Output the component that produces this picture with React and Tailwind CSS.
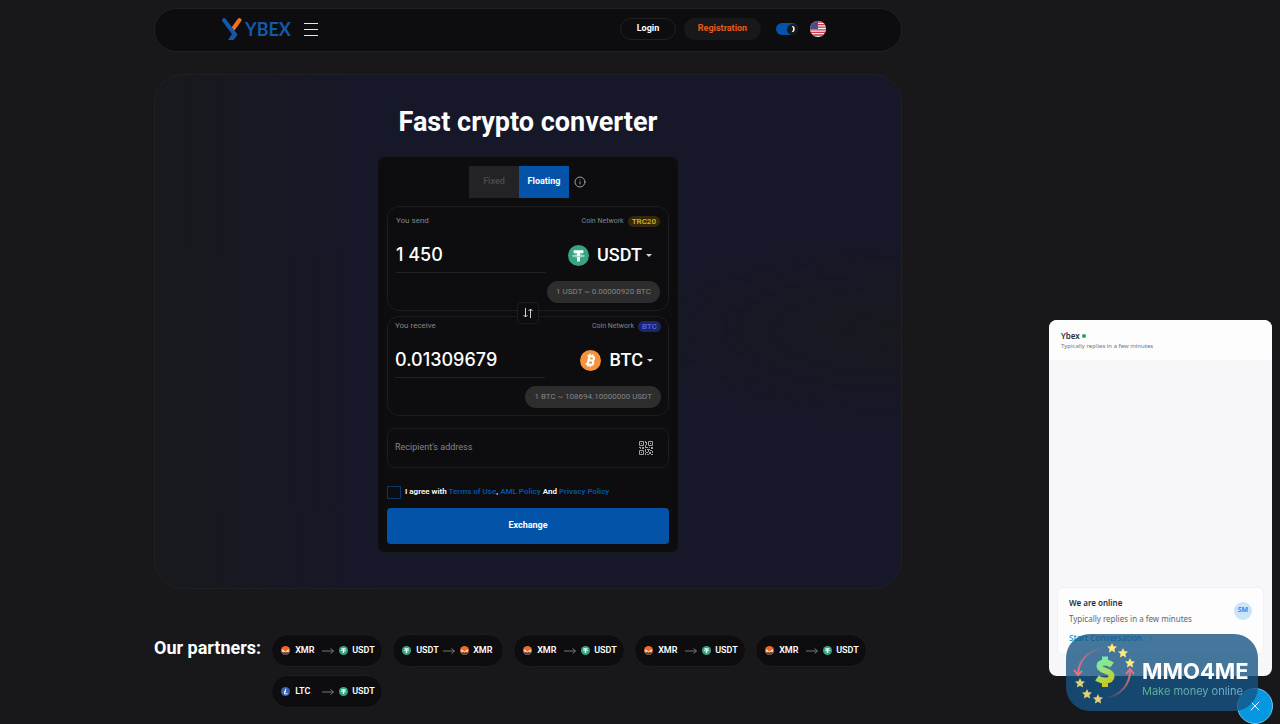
import { useState } from "react"
import { Info, X, ChevronRight } from "lucide-react"

const partners = [
  ["XMR", "USDT"],
  ["USDT", "XMR"],
  ["XMR", "USDT"],
  ["XMR", "USDT"],
  ["XMR", "USDT"],
  ["LTC", "USDT"],
]

function CoinIcon({ coin, className }) {
  if (coin === "USDT") {
    return (
      <svg viewBox="0 0 32 32" className={className} aria-hidden="true">
        <circle cx="16" cy="16" r="16" fill="#35a582" />
        <path fill="#fff" d="M8.500 8h15v4.600h-5.200v2c4 .2 7 1 7 2s-3 1.800-7 2V25h-4.600v-6.400c-4-.2-7-1-7-2s3-1.800 7-2v-2H8.500z" />
        <path fill="none" stroke="#35a582" strokeWidth="0.9" d="M13.700 15.500c-3.400.2-5.600.7-5.600 1.200 0 .7 3.600 1.200 7.900 1.200s7.900-.5 7.900-1.200c0-.5-2.200-1-5.600-1.200" />
      </svg>
    )
  }
  if (coin === "BTC") {
    return (
      <svg viewBox="0 0 32 32" className={className} aria-hidden="true">
        <circle cx="16" cy="16" r="16" fill="#f7923a" />
        <g transform="rotate(13 16 16)" fill="none" stroke="#fff" strokeWidth="3.2">
          <path d="M10 9.500h7.500a3 3 0 0 1 0 6.300H13M17.500 15.800a3.300 3.300 0 0 1 0 6.700H10M13 9.500v13" />
          <path strokeWidth="2.2" d="M13.700 6v3.500M17.600 6v3.500M13.700 22.500V26M17.600 22.500V26" />
        </g>
      </svg>
    )
  }
  if (coin === "LTC") {
    return (
      <svg viewBox="0 0 32 32" className={className} aria-hidden="true">
        <circle cx="16" cy="16" r="16" fill="#3a62ad" />
        <path fill="none" stroke="#fff" strokeWidth="3.5" d="M17 6l-4.500 18H23M10 18.500l8-3.500" />
      </svg>
    )
  }
  return (
    <svg viewBox="0 0 32 32" className={className} aria-hidden="true">
      <circle cx="16" cy="16" r="16" fill="#f26822" />
      <path fill="#f5ece8" d="M5 11l11 9 11-9v12H5z" />
      <path fill="#f26822" d="M9 10h14l-7 7z" />
      <path fill="#4c4c4c" d="M1.500 22.500H10V19l6 5 6-5v3.500h8.500a16 16 0 0 1-29 0z" />
    </svg>
  )
}

function QrIcon() {
  return (
    <svg viewBox="0 0 14 14" className="size-[14px]" aria-hidden="true">
      <path fill="none" stroke="#a0a0a0" d="M.5.5h4v4h-4zM9.500.5h4v4h-4zM.5 9.500h4v4h-4z" />
      <path
        fill="#a0a0a0"
        d="M2 2h1v1H2zM11 2h1v1h-1zM2 11h1v1H2zM6 0h1v2H6zM7 1h1v3H7zM6 4h1v2H6zM0 6h2v1H0zM3 6h2v2H3zM6 6h3v1H6zM10 6h1v1h-1zM12 6h2v2h-2zM1 7h1v1H1zM6 8h1v3H6zM8 8h3v1H8zM7 11h2v1H7zM9 9h1v2H9zM11 9h2v1h-2zM10 11h2v2h-2zM13 10h1v2h-1zM6 12h1v2H6zM8 13h2v1H8zM12 13h2v1h-2z"
      />
    </svg>
  )
}

function Header() {
  const [dark, setDark] = useState(true)

  return (
    <header className="flex h-11 items-center justify-between rounded-full border border-[#202022] bg-[#0d0d0f] pr-[75px] pb-[2px] pl-[66px]">
      <div className="flex items-center gap-[13px]">
        <a href="#" className="flex items-center gap-[2px] font-['Lato',sans-serif] text-lg leading-6 font-bold text-[#1259a8]">
          <svg viewBox="0 0 22 24" className="h-6 w-[22px]" fill="none" aria-hidden="true">
            <path stroke="#f4701f" strokeWidth="4" strokeLinecap="round" d="M18.500 3l-6.500 9" />
            <path stroke="#1259a8" strokeWidth="4" strokeLinecap="round" d="M3 3l10.500 14" />
            <path fill="#1259a8" d="M12 13l4 3.500c.6.7.6 1.400 0 2.100L12.500 23H7l4-6z" />
          </svg>
          YBEX
        </a>
        <button aria-label="Menu" className="text-gray-200">
          <svg viewBox="0 0 14 14" className="size-[14px]" stroke="currentColor" strokeWidth="1.2">
            <path d="M0 1.500h14M0 7.500h14M0 13.500h14" />
          </svg>
        </button>
      </div>
      <div className="flex items-center text-[9px] font-bold">
        <button className="h-[22px] w-14 rounded-full border border-[#202022] text-white">Login</button>
        <button className="ml-2 h-[22px] w-[77px] rounded-full bg-[#18181a] text-[#e8591c]">Registration</button>
        <label className="relative ml-[15px] flex h-3 w-[22px] items-center justify-end rounded-full bg-[#0353a9]">
          <input
            type="checkbox"
            aria-label="Dark theme"
            checked={dark}
            onChange={() => setDark(!dark)}
            className="absolute inset-0 appearance-none"
          />
          <span className="flex size-[11px] items-center justify-center rounded-full bg-[#18181a]">
            <svg viewBox="0 0 8 8" className="size-2" fill="#fff" aria-hidden="true">
              <path d="M2.500 .8a3.200 3.200 0 1 1 0 6.400c1-.9 1.500-2 1.500-3.200s-.5-2.300-1.500-3.200z" />
            </svg>
          </span>
        </label>
        <button aria-label="Language" className="ml-3">
          <svg viewBox="0 0 16 16" className="size-4">
            <clipPath id="flag">
              <circle cx="8" cy="8" r="8" />
            </clipPath>
            <g clipPath="url(#flag)">
              <rect width="16" height="16" fill="#f3eef0" />
              <path stroke="#c93648" strokeWidth="1.3" d="M0 1h16M0 3.600h16M0 6.200h16M0 8.800h16M0 11.400h16M0 14h16" />
              <rect width="8" height="8" fill="#4b4e88" />
            </g>
          </svg>
        </button>
      </div>
    </header>
  )
}

function AmountBox({ id, label, coin, value, network, badge, rate, className }) {
  return (
    <div className={className}>
      <div className="flex h-3 items-center justify-between text-[8px] text-[#858585]">
        <label htmlFor={id}>{label}</label>
        <div className="flex items-center gap-1 text-[7px]">
          Coin Network
          <span className={badge}>{network}</span>
        </div>
      </div>
      <div className="flex h-[46px] items-end justify-between">
        <input
          id={id}
          defaultValue={value}
          className="h-9 w-[150px] border-b border-[#222224] bg-transparent font-['Inter',sans-serif] text-lg font-medium text-white outline-none"
        />
        <button className="flex h-9 items-center gap-2 pr-2 text-lg font-medium text-white">
          <CoinIcon coin={coin} className="size-[21px]" />
          {coin}
          <span className="-ml-1 border-x-[3px] border-t-[3px] border-x-transparent border-t-gray-300" />
        </button>
      </div>
      <div className="mt-2 flex justify-end">
        <span className="rounded-full bg-[#2d2d2e] px-[9px] text-[8px] leading-[22px] text-[#858585]">{rate}</span>
      </div>
    </div>
  )
}

function Converter() {
  const [mode, setMode] = useState("Floating")

  return (
    <div className="mx-auto mt-4 w-[302px] rounded-lg border border-[#1a1a1c] bg-[#0d0d0f] px-[9px] pt-[9px] pb-2">
      <div className="flex items-center pl-[82px] text-[9px] font-bold">
        {["Fixed", "Floating"].map(name => (
          <button
            key={name}
            onClick={() => setMode(name)}
            className={mode === name ? "h-8 w-[50px] bg-[#0353a9] text-white" : "h-8 w-[50px] bg-[#232326] text-[#47474a]"}
          >
            {name}
          </button>
        ))}
        <Info size={12} className="ml-[5px] text-[#a0a0a0]" />
      </div>
      <div className="relative mt-2 flex flex-col gap-[5px]">
        <AmountBox
          id="send"
          label="You send"
          coin="USDT"
          value="1 450"
          network="TRC20"
          badge="rounded-full bg-[#33290a] px-1 text-[8px] leading-[11px] font-semibold text-[#d9ad10]"
          rate="1 USDT ~ 0.00000920 BTC"
          className="h-[105px] rounded-xl border border-[#1d1d1f] px-2 pt-2"
        />
        <button
          aria-label="Swap currencies"
          className="absolute bottom-[92px] left-1/2 flex size-[22px] -translate-x-1/2 items-center justify-center rounded border border-[#1d1d1f] bg-[#0d0d0f]"
        >
          <svg viewBox="0 0 10 10" className="size-[10px]" fill="none" stroke="#d0d0d0">
            <path d="M2.500 0v9M.5 7l2 2 2-2M7.500 10V1M5.500 3l2-2 2 2" />
          </svg>
        </button>
        <AmountBox
          id="receive"
          label="You receive"
          coin="BTC"
          value="0.01309679"
          network="BTC"
          badge="rounded-full bg-[#1d2763] px-1 text-[8px] leading-[11px] font-semibold text-[#4c63ea]"
          rate="1 BTC ~ 108694.10000000 USDT"
          className="h-[100px] rounded-xl border border-[#1d1d1f] px-[7px] pt-[3px]"
        />
      </div>
      <div className="mt-3 flex h-10 items-center rounded-lg border border-[#1d1d1f] pr-[15px] pl-[7px]">
        <input
          aria-label="Recipient's address"
          placeholder="Recipient's address"
          className="min-w-0 flex-1 bg-transparent text-[9px] text-white outline-none placeholder:text-[#858585]"
        />
        <QrIcon />
      </div>
      <div className="mt-[17px] flex h-[14px] items-center gap-1 text-[8px] font-semibold text-white">
        <input id="agree" type="checkbox" className="h-[13px] w-[14px] appearance-none border border-[#0a3565]" />
        <label htmlFor="agree">
          I agree with <a href="#" className="text-[#0353a9]">Terms of Use</a>,{" "}
          <a href="#" className="text-[#0353a9]">AML Policy</a> And{" "}
          <a href="#" className="text-[#0353a9]">Privacy Policy</a>
        </label>
      </div>
      <button className="mt-[9px] h-9 w-full rounded bg-[#0353a9] text-[9px] font-bold text-white">Exchange</button>
    </div>
  )
}

function Partners() {
  return (
    <section className="mt-[45px] flex items-start gap-[10px]">
      <h2 className="text-lg leading-7 font-bold whitespace-nowrap text-white">Our partners:</h2>
      <div className="flex flex-wrap gap-x-[9px] gap-y-2">
        {partners.map(([from, to], i) => (
          <a
            key={i}
            href="#"
            className="flex h-[33px] w-28 items-center rounded-full border border-[#1d1d1f] bg-[#0d0d0f] pl-[9px] text-[9px] font-semibold text-white"
          >
            <CoinIcon coin={from} className="size-[9px]" />
            <span className="ml-[5px] w-[27px]">{from}</span>
            <svg viewBox="0 0 12 6" className="h-[6px] w-3 shrink-0" fill="none" stroke="#77777a">
              <path d="M0 3h11.500M8.500.5l3 2.500-3 2.500" />
            </svg>
            <CoinIcon coin={to} className="ml-[5px] size-[9px]" />
            <span className="ml-1">{to}</span>
          </a>
        ))}
      </div>
    </section>
  )
}

function ChatWidget() {
  return (
    <aside className="fixed right-2 bottom-12 flex h-[356px] w-[223px] flex-col overflow-hidden rounded-lg bg-[#f7f7f9] font-['Noto_Sans',sans-serif]">
      <div className="h-10 bg-[#fdfdfd] px-3 pt-[10px]">
        <div className="flex items-center gap-[2px] text-[8px] leading-3 font-semibold text-[#1f2d3d]">
          Ybex <span className="size-1 rounded-full bg-[#18a957]" />
        </div>
        <p className="text-[6px] leading-2 text-[#6b7785]">Typically replies in a few minutes</p>
      </div>
      <div className="mx-2 mt-auto mb-[21px] h-[68px] rounded-md border border-[#f1f1f3] bg-[#fdfdfd] px-[11px] pt-[7px] text-[8px]">
        <div className="flex items-center justify-between">
          <div>
            <p className="leading-4 font-semibold text-[#1f2d3d]">We are online</p>
            <p className="leading-[15px] text-[#5c6670]">Typically replies in a few minutes</p>
          </div>
          <span className="flex size-[18px] items-center justify-center rounded-full bg-[#c9e4fd] text-[7px] font-bold text-[#2c8fe6]">SM</span>
        </div>
        <button className="mt-1 flex items-center gap-1 leading-4 font-semibold text-[#1a9fd4]">
          Start Conversation <ChevronRight size={9} />
        </button>
      </div>
    </aside>
  )
}

function Star({ x, y, fill }) {
  return (
    <path
      transform={`translate(${x} ${y})`}
      fill={fill}
      d="M0-5l1.500 3.200 3.500.4L2.400 1l.7 3.600L0 2.800l-3.100 1.800.7-3.600L-5-1.400l3.500-.4z"
    />
  )
}

function MoneyBadge() {
  return (
    <div className="pointer-events-none fixed right-[22px] bottom-[13px] flex h-[77px] w-48 items-center rounded-3xl bg-[#175585]/80 pl-1">
      <svg viewBox="0 0 70 70" className="size-[70px] shrink-0" aria-hidden="true">
        <defs>
          <linearGradient id="money" gradientUnits="userSpaceOnUse" x1="28" y1="20" x2="42" y2="48">
            <stop offset="0" stopColor="#6ff0b0" />
            <stop offset="0.5" stopColor="#a3e06a" />
            <stop offset="1" stopColor="#d0c010" />
          </linearGradient>
          <linearGradient id="arcLeft" x1="1" y1="0" x2="0" y2="1">
            <stop offset="0" stopColor="#e06c7d" stopOpacity="0" />
            <stop offset="1" stopColor="#f0717d" />
          </linearGradient>
          <linearGradient id="arcRight" x1="0" y1="1" x2="1" y2="0">
            <stop offset="0" stopColor="#e06c7d" stopOpacity="0" />
            <stop offset="1" stopColor="#f0717d" />
          </linearGradient>
        </defs>
        <path fill="none" stroke="url(#arcLeft)" strokeWidth="2" d="M34 10C18 12 9 22 8 36" />
        <path fill="none" stroke="#f0717d" strokeWidth="2" d="M4 32l4 5 4-4" />
        <path fill="none" stroke="url(#arcRight)" strokeWidth="2" d="M35 60C51 58 60 46 60 33" />
        <path fill="none" stroke="#f0717d" strokeWidth="2" d="M56 36l4-5 4 5" />
        <path
          fill="none"
          stroke="url(#money)"
          strokeWidth="6"
          strokeLinejoin="round"
          d="M42 27c-2-1.500-4.500-2.500-7-2.500-4 0-5.500 1.500-5.500 3.500 0 6 12 3.500 12 10 0 3-2.500 4.500-6.500 4.500-3 0-6-1-8-2.500M35 18.500v6M35 42v7"
        />
        <Star x="42" y="10" fill="#ffe978" />
        <Star x="53" y="15" fill="#ffe978" />
        <Star x="60" y="25" fill="#ffe978" />
        <Star x="10" y="45" fill="#e0d078" />
        <Star x="17" y="56" fill="#e0d078" />
        <Star x="28" y="61" fill="#e0d078" />
      </svg>
      <div className="ml-[2px] pt-3 font-['Inter',sans-serif] whitespace-nowrap">
        <p className="text-[22px] leading-6 font-bold text-white">MMO4ME</p>
        <p className="bg-linear-to-r from-[#5fb08c] to-[#79b0de] bg-clip-text text-[11px] leading-4 text-transparent">Make money online</p>
      </div>
    </div>
  )
}

function App() {
  return (
    <div className="min-h-screen bg-[#18181a] font-['Roboto',sans-serif]">
      <div className="w-[82.5%] pt-2">
        <div className="mx-auto max-w-[748px]">
          <Header />
          <main>
            <section className="mt-[22px] rounded-[28px] border border-[#202024] bg-[#161729] bg-[linear-gradient(to_right,#18191c_0%,transparent_30%),radial-gradient(ellipse_at_right,#18181e_0%,transparent_28%)] pt-[29px] pb-[35px]">
              <h1 className="text-center text-[27px] leading-9 font-bold text-white">Fast crypto converter</h1>
              <Converter />
            </section>
            <Partners />
          </main>
        </div>
      </div>
      <ChatWidget />
      <button
        aria-label="Close chat"
        className="fixed right-[7px] bottom-0 flex size-9 items-center justify-center rounded-full border border-[#6cc6f0] bg-[#0598e0] text-white"
      >
        <X size={16} strokeWidth={1.5} />
      </button>
      <MoneyBadge />
    </div>
  )
}

export default App
